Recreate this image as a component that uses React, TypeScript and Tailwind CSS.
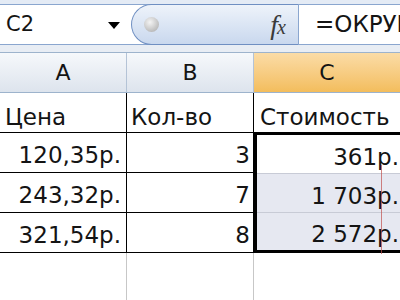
import React from 'react';

const rows = [
  { a: '120,35р.', b: '3', c: '361р.' },
  { a: '243,32р.', b: '7', c: '1 703р.' },
  { a: '321,54р.', b: '8', c: '2 572р.' },
];

export default function App() {
  return (
    <div className="relative w-[400px] h-[300px] overflow-hidden bg-white text-[#141414] font-['DejaVu_Sans',Verdana,sans-serif]">
      {/* formula bar */}
      <div className="pt-[4px] bg-[#e4ebf5]">
        <div className="flex h-[41px] border-t border-b border-[#8aa6cf] bg-white">
          <div className="flex w-[131px] shrink-0 items-center justify-between pl-[6px] pr-[11px] text-[21px]">
            <span>C2</span>
            <span className="mt-[2px] h-0 w-0 border-x-[6px] border-t-[7px] border-x-transparent border-t-black" />
          </div>
          <div className="-my-px flex w-[167px] shrink-0 items-center justify-between rounded-l-full border border-r-0 border-[#6f8fc2] bg-gradient-to-b from-[#eef3fa] to-[#c9d8ee] pl-[12px] pr-[13px]">
            <span className="h-[15px] w-[15px] rounded-full bg-[radial-gradient(circle_at_40%_35%,#f4f4f4,#a6a6a6)]" />
            <span className="font-['Liberation_Serif',serif] italic text-[28px] leading-none text-[#3a3a3a] tracking-[-1px]">
              f<span className="text-[20px]">x</span>
            </span>
          </div>
          <div className="flex min-w-0 flex-1 items-center overflow-hidden whitespace-nowrap border-l border-[#8aa6cf] pl-[16px] text-[23px]">=ОКРУГЛ</div>
        </div>
      </div>
      <div className="h-[7px] bg-[#e8edf4]" />

      {/* column headers */}
      <div className="grid h-[41px] grid-cols-[127px_127px_146px] border-t border-b border-[#9db3cc] text-[22px]">
        <div className="flex items-center justify-center border-r border-[#b4c3d6] bg-gradient-to-b from-[#f6f8fb] to-[#dde4ed]">A</div>
        <div className="flex items-center justify-center border-r border-[#b4c3d6] bg-gradient-to-b from-[#f6f8fb] to-[#dde4ed]">B</div>
        <div className="flex items-center justify-center bg-gradient-to-b from-[#fbdca6] to-[#f3bd5c]">C</div>
      </div>

      {/* data */}
      <div className="grid grid-cols-[127px_127px_146px] text-[23px] leading-none">
        <div className="flex h-[40px] items-end border-r border-b border-black pb-[3px] pl-[5px]">Цена</div>
        <div className="flex h-[40px] items-end border-r border-b border-black pb-[3px] pl-[4px]">Кол-во</div>
        <div className="flex h-[40px] items-end whitespace-nowrap border-b border-black pb-[3px] pl-[6px]">Стоимость</div>
      </div>
      <div className="flex">
        <div className="w-[254px]">
          {rows.map((r) => (
            <div key={r.a} className="grid h-[40px] grid-cols-[127px_127px] border-b border-black text-[23px] leading-none">
              <div className="flex items-end justify-end border-r border-black pb-[5px] pr-[5px]">{r.a}</div>
              <div className="flex items-end justify-end border-r border-black pb-[5px] pr-[3px]">{r.b}</div>
            </div>
          ))}
        </div>
        <div className="-mt-px h-[121px] flex-1 border-[3px] border-r-0 border-black">
          {rows.map((r, i) => (
            <div
              key={r.c}
              className={`flex h-[38.3px] items-end justify-end whitespace-nowrap pb-[4px] pr-[1px] text-[23px] leading-none ${i === 0 ? 'bg-white' : 'border-t border-[#c8cbd6] bg-[#e6e8f1]'}`}
            >
              {r.c}
            </div>
          ))}
        </div>
      </div>
      <div className="flex h-[60px]">
        <div className="w-[127px] border-r border-[#c7c7c7]" />
        <div className="w-[127px] border-r border-[#c7c7c7]" />
      </div>
      {/* page break marker */}
      <div className="absolute left-[381px] top-[165px] h-[89px] w-px bg-[#c0504d]/70" />
    </div>
  );
}
